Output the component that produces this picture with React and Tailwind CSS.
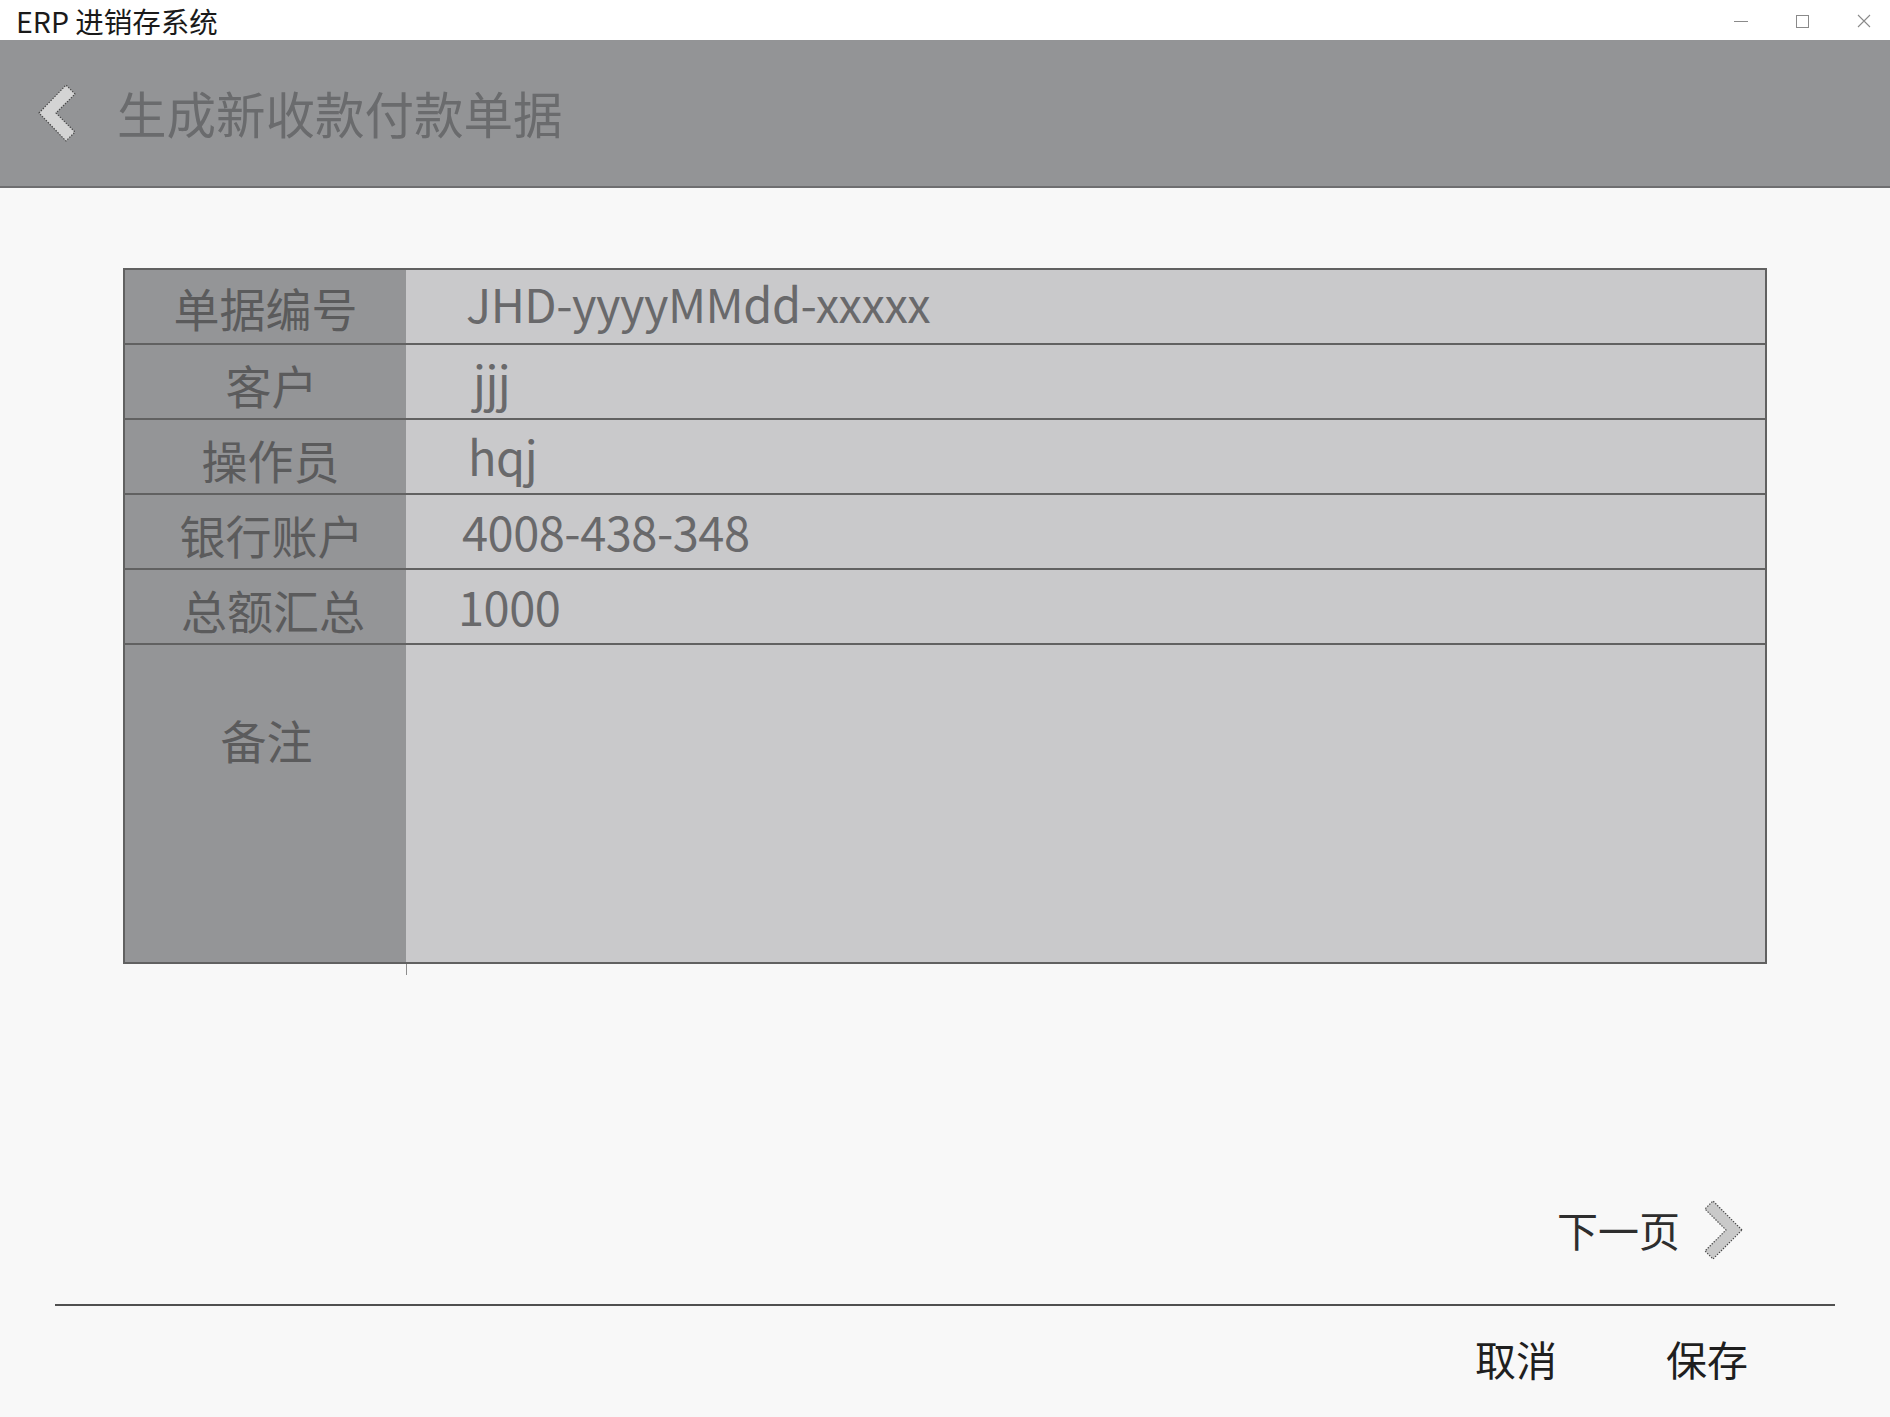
import React from "react";

const CJK = { fontFamily: '"Noto Sans CJK SC", "Noto Sans", sans-serif' };

function BackChevron() {
  return (
    <svg width="38" height="58" viewBox="0 0 38 58">
      <polygon
        points="1,29 28,1 37,10 18,29 37,48 28,57"
        fill="#d4d4d4"
        stroke="#4a4a4a"
        strokeWidth="1.2"
        strokeDasharray="1.4 1.4"
      />
    </svg>
  );
}

function NextChevron() {
  return (
    <svg width="41" height="61" viewBox="0 0 41 61">
      <polygon
        points="39,30 10,1 2,9 23,30 2,51 10,59"
        fill="#c9c9c9"
        stroke="#4a4a4a"
        strokeWidth="1.2"
        strokeDasharray="1.4 1.4"
      />
    </svg>
  );
}

const rows = [
  { label: "单据编号", value: "JHD-yyyyMMdd-xxxxx", pl: "pl-[60px] pb-[9px]", lp: "pl-0 pt-[0px]" },
  { label: "客户", value: "jjj", pl: "pl-[67px] pb-[2px]", lp: "pl-[12px] pt-[4px]" },
  { label: "操作员", value: "hqj", pl: "pl-[62px] pb-[2px]", lp: "pl-[10px] pt-[4px]" },
  { label: "银行账户", value: "4008-438-348", pl: "pl-[56px] pb-[2px]", lp: "pl-[12px] pt-[4px]" },
  { label: "总额汇总", value: "1000", pl: "pl-[52px] pb-[2px]", lp: "pl-[15px] pt-[5px]" },
];

export default function App() {
  return (
    <div
      className="w-[1890px] h-[1417px] flex flex-col bg-[#f8f8f8] overflow-hidden"
      style={CJK}
    >
      {/* Title bar */}
      <div className="h-[40px] bg-white flex items-center justify-between">
        <div className="pl-[16px] pt-[3px] text-[28.5px] leading-none text-[#1a1a1a]">
          ERP 进销存系统
        </div>
        <div className="flex items-center gap-[48px] pr-[19px] pt-[2px]">
          <div className="w-[14px] h-px bg-[#8a8a8a]" />
          <div className="w-[13px] h-[13px] border border-[#8a8a8a]" />
          <svg width="14" height="14" viewBox="0 0 14 14">
            <path d="M1 1 L13 13 M13 1 L1 13" stroke="#8a8a8a" strokeWidth="1.1" />
          </svg>
        </div>
      </div>

      {/* Header */}
      <div className="h-[148px] bg-[#939496] border-b-2 border-[#6e6e70] flex items-center">
        <div className="ml-[38px] flex items-center">
          <BackChevron />
        </div>
        <div className="ml-[41px] text-[49.5px] leading-none text-[#6a6b6d] pb-[1px]">
          生成新收款付款单据
        </div>
      </div>

      {/* Content */}
      <div className="flex flex-col">
        <div className="mt-[80px] ml-[123px] w-[1644px] h-[696px] border-2 border-[#616161] flex flex-col">
          {rows.map((r) => (
            <div
              key={r.label}
              className="h-[75px] border-b-2 border-[#616161] grid grid-cols-[281px_1fr]"
            >
              <div
                className={`bg-[#949597] flex items-center justify-center ${r.lp} text-[46px] leading-none text-[#5b5b5c]`}
              >
                {r.label}
              </div>
              <div
                className={`bg-[#c9c9cb] flex items-center ${r.pl} text-[47px] leading-none text-[#69696b] tracking-[-0.5px]`}
              >
                {r.value}
              </div>
            </div>
          ))}
          <div className="flex-1 grid grid-cols-[281px_1fr]">
            <div className="bg-[#949597] flex justify-center pl-[2px] pt-[71px] text-[46px] leading-none text-[#5b5b5c]">
              备注
            </div>
            <div className="bg-[#c9c9cb]" />
          </div>
        </div>
        <div className="ml-[406px] w-px h-[11px] bg-[#8c8c8c]" />

        {/* Next page */}
        <div className="mt-[225px] h-[60px] flex items-center justify-end pr-[146px] gap-[23px]">
          <div className="text-[41px] leading-none text-[#2e2e2e] pb-[2px]">下一页</div>
          <NextChevron />
        </div>

        {/* Divider */}
        <div className="mt-[44px] mx-[55px] h-[2px] bg-[#505050]" />

        {/* Buttons */}
        <div className="mt-[32px] flex justify-end pr-[142px] gap-[109px] text-[41px] leading-none text-[#1f1f1f]">
          <div>取消</div>
          <div>保存</div>
        </div>
      </div>
    </div>
  );
}
